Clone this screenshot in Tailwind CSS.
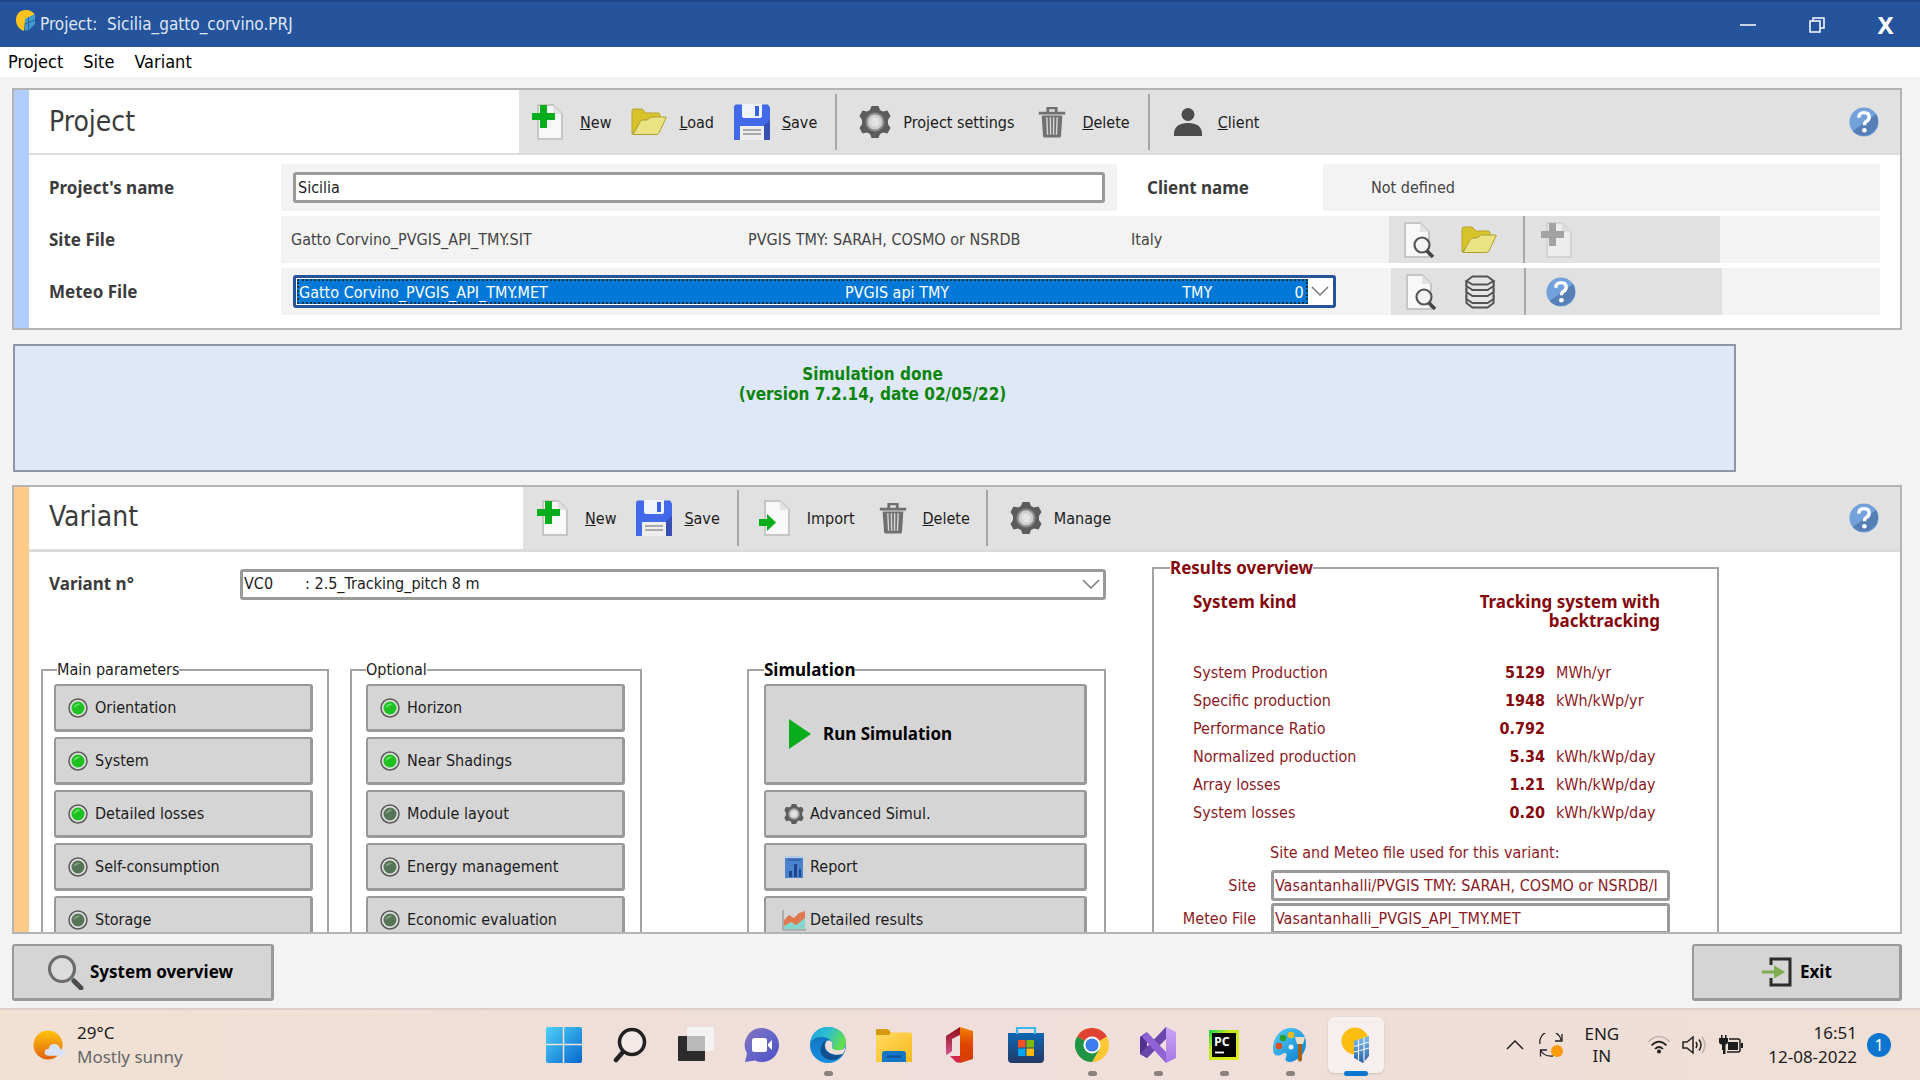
<!DOCTYPE html>
<html lang="en">
<head>
<meta charset="utf-8">
<title>Project: Sicilia_gatto_corvino.PRJ</title>
<script src="https://cdn.jsdelivr.net/npm/@tailwindcss/browser@4"></script>
</head>
<body class="flex h-screen flex-col overflow-hidden bg-[#f3f3f3] font-['DejaVu_Sans_Condensed','DejaVu_Sans',sans-serif] text-base text-[#1c1c1c]">

<!-- shared icons -->
<svg class="absolute h-0 w-0" aria-hidden="true">
  <defs>
    <linearGradient id="gStart" x1="0" y1="0" x2="1" y2="1"><stop offset="0" stop-color="#4fd0fb"/><stop offset="1" stop-color="#0669ce"/></linearGradient>
    <linearGradient id="gSun" x1="0" y1="0" x2="0" y2="1"><stop offset="0" stop-color="#fdc50b"/><stop offset="1" stop-color="#e2620e"/></linearGradient>
    <linearGradient id="gChat" x1="0" y1="0" x2="1" y2="1"><stop offset="0" stop-color="#8a6cb4"/><stop offset=".4" stop-color="#6a6acb"/><stop offset="1" stop-color="#4e4fc4"/></linearGradient>
    <linearGradient id="gEdge" x1="0" y1="0" x2="1" y2=".4"><stop offset="0" stop-color="#1c9fe0"/><stop offset=".5" stop-color="#2dc0d0"/><stop offset="1" stop-color="#63dc4e"/></linearGradient>
    <linearGradient id="gEdge2" x1="0" y1="0" x2="0" y2="1"><stop offset="0" stop-color="#0f6bb8"/><stop offset="1" stop-color="#1790e0"/></linearGradient>
    <linearGradient id="gFold" x1="0" y1="0" x2="1" y2="1"><stop offset="0" stop-color="#ffdb62"/><stop offset="1" stop-color="#f8b91b"/></linearGradient>
    <linearGradient id="gStore" x1="0" y1="0" x2="0" y2="1"><stop offset="0" stop-color="#0f67b2"/><stop offset="1" stop-color="#233a66"/></linearGradient>
    <linearGradient id="gOff" x1="0" y1="0" x2="0" y2="1"><stop offset="0" stop-color="#f08100"/><stop offset=".5" stop-color="#de4300"/><stop offset="1" stop-color="#d83b01"/></linearGradient>
    <linearGradient id="gOff2" x1="0" y1="0" x2="0" y2="1"><stop offset="0" stop-color="#8f0e12"/><stop offset="1" stop-color="#d5568f"/></linearGradient>
    <linearGradient id="gPaint" x1="0" y1="0" x2="1" y2="1"><stop offset="0" stop-color="#55d0f6"/><stop offset="1" stop-color="#0a7bd0"/></linearGradient>
    <linearGradient id="gPy" x1="0" y1="0" x2="1" y2="1"><stop offset="0" stop-color="#12d34e"/><stop offset=".35" stop-color="#c2e81f"/><stop offset="1" stop-color="#e9ef1d"/></linearGradient>
    <linearGradient id="gPanel" x1="0" y1="0" x2="0" y2="1"><stop offset="0" stop-color="#7cc0e8"/><stop offset="1" stop-color="#2a5da8"/></linearGradient>
    <linearGradient id="gVs" x1="0" y1="0" x2="0" y2="1"><stop offset="0" stop-color="#c9a3f6"/><stop offset="1" stop-color="#a878e6"/></linearGradient>
  </defs>
  <symbol id="i-page" viewBox="0 0 36 36">
    <path d="M6 1h15l9 9v25H6z" fill="#f8f8f8" stroke="#c6c6c6" stroke-width="2"/><path d="M21 1v9h9z" fill="#e2e2e2"/>
  </symbol>
  <symbol id="i-new" viewBox="0 0 36 36">
    <use href="#i-page"/><path d="M8 1h7v8h8v7h-8v8H8v-8H0V9h8z" fill="#07ad1b"/>
  </symbol>
  <symbol id="i-new-off" viewBox="0 0 36 36">
    <path d="M6 1h15l9 9v25H6z" fill="#ececec" stroke="#d2d2d2" stroke-width="2"/><path d="M21 1v9h9z" fill="#dcdcdc"/><path d="M8 1h7v8h8v7h-8v8H8v-8H0V9h8z" fill="#a3a3a3"/>
  </symbol>
  <symbol id="i-import" viewBox="0 0 36 36">
    <use href="#i-page"/><path d="M0 19h8v-5l9 8.500-9 8.500v-5H0z" fill="#07ad1b"/>
  </symbol>
  <symbol id="i-view" viewBox="0 0 36 36">
    <use href="#i-page"/><circle cx="23" cy="23" r="7.500" fill="#f4f4f4" stroke="#555" stroke-width="2.200"/><path d="M28 29l6 6" stroke="#444" stroke-width="3.500"/>
  </symbol>
  <symbol id="i-folder" viewBox="0 0 36 36">
    <path d="M1 30V7q0-2 2-2h8l4 4h12q2 0 2 2v5H12L1 30z" fill="#d9c32b" stroke="#b8a32a"/><path d="M2 30.500L9 18q1-2 3-2h4l4-3h15q.5 0 0 1L28 29q-1 1.500-3 1.500z" fill="#e9e384" stroke="#b0a030"/>
  </symbol>
  <symbol id="i-save" viewBox="0 0 36 36">
    <path d="M0 3q0-2.500 2-2.500h32l2 3V35q0 1-1 1H0z" fill="#4169ea"/><path d="M36 16v19q0 1-1 1h-6V22z" fill="#3650b4"/><path d="M8 0h20v12q0 2-2 2H10q-2 0-2-2z" fill="#f1f3fa"/><path d="M21 2h4v10h-4z" fill="#3a60e2"/><path d="M6 22h24v14H6z" fill="#eee"/><path d="M9 26h18M9 30h18" stroke="#aaa" stroke-width="2"/>
  </symbol>
  <symbol id="i-gear" viewBox="0 0 32 32">
    <path d="M12.500 0h7l1.500 4 3 1.500 4.500-1 3 5.500-2.500 4v4l2.500 4-3 5.500-4.500-1-3 1.500-1.500 4h-7L11 28l-3-1.500-4.500 1L.5 22 3 18v-4L.5 10l3-5.500 4.500 1L11 4z" fill="#5c5c5c"/><circle cx="16" cy="16" r="8" fill="#cfcfcf"/><circle cx="16" cy="16" r="8.500" fill="none" stroke="#8d8d8d" stroke-width="2"/><circle cx="16" cy="16" r="4.500" fill="#e3e3e3"/>
  </symbol>
  <symbol id="i-trash" viewBox="0 0 28 34">
    <path d="M0 6h28v3H0zM8 6V1h12v5h-3V3.500h-6V6zM3 10h22l-1.500 22q0 1.500-1.500 1.500H6q-1.500 0-1.500-1.500z" fill="#707070"/><path d="M8.500 12l.8 18.500M12.300 12l.2 18.500M15.800 12l-.2 18.500M19.500 12l-.8 18.500" stroke="#d6d6d6" stroke-width="1.500"/>
  </symbol>
  <symbol id="i-person" viewBox="0 0 28 28">
    <circle cx="14" cy="6.500" r="6.500" fill="#4c4c4c"/><path d="M0 28v-3q1-10 14-10t14 10v3z" fill="#4c4c4c"/>
  </symbol>
  <symbol id="i-help" viewBox="0 0 32 32">
    <circle cx="16" cy="16" r="15.500" fill="#72a1dc"/><path d="M29 7.500A15.500 15.500 0 0 1 4 25.500z" fill="#557fb5"/><path d="M10.500 11.500q0-5.500 5.500-5.500t5.500 5q0 3-3 4.500-2 1-2 4" fill="none" stroke="#fff" stroke-width="3.600"/><circle cx="16.400" cy="24.800" r="2.500" fill="#fff"/>
  </symbol>
  <symbol id="i-db" viewBox="0 0 30 34">
    <g fill="#e6e6e6" stroke="#555" stroke-width="2"><path d="M1.500 6v22l6 4.500h15l6-4.500V6z"/><path d="M1.500 20v4l6 4h15l6-4v-4"/><path d="M1.500 13v4l6 4h15l6-4v-4"/><path d="M1.500 6v5l6 4h15l6-4V6"/><path d="M7.500 1.500h15L28.500 6l-6 3.500h-15L1.500 6z"/></g>
  </symbol>
  <symbol id="i-on" viewBox="0 0 20 20">
    <circle cx="10" cy="10" r="9" fill="#dedede" stroke="#5a5a5a" stroke-width="1.500"/><circle cx="10" cy="10" r="6.500" fill="#1fc122"/><path d="M5.500 10a5 5 0 0 1 7-4z" fill="#62e065"/>
  </symbol>
  <symbol id="i-off" viewBox="0 0 20 20">
    <circle cx="10" cy="10" r="9" fill="#dedede" stroke="#5a5a5a" stroke-width="1.500"/><circle cx="10" cy="10" r="6.500" fill="#567556"/><path d="M5.500 10a5 5 0 0 1 7-4z" fill="#7fa07f"/>
  </symbol>
  <symbol id="i-chev" viewBox="0 0 18 10"><path d="M1 1l8 8 8-8" fill="none" stroke="#777" stroke-width="1.500"/></symbol>
  <symbol id="i-pv" viewBox="0 0 30 36">
    <circle cx="14" cy="14" r="13.500" fill="#fbbd0f"/><path d="M13 14L28 9v20l-6 7-9-5z" fill="url(#gPanel)"/><path d="M13 19.500l15-4.500M13 25l15-4M17.500 12.500v21M23 10.500v24" stroke="#eef4fa" stroke-width="1.200"/>
  </symbol>
</svg>

<header class="flex h-[47px] shrink-0 items-center border-t-2 border-[#1e4688] bg-[#25539c] pl-4 text-white">
  <svg class="mb-2 h-6 w-5" viewBox="0 0 20 24"><path d="M10 1C4 1 0 5 0 11c0 5 3 9 8 11l1-11 10-5q-3-5-9-5z" fill="#f9c31c"/><path d="M9 10l10-5v10l-5 5-5 2z" fill="#3f9ccc"/><path d="M12.500 8v12M9 15l10-4" stroke="#25649f"/></svg>
  <h1 class="ml-1 flex-1 whitespace-pre text-[17px] text-[#dfe6f3]">Project:  Sicilia_gatto_corvino.PRJ</h1>
  <button aria-label="Minimize" class="flex h-11 w-[69px] items-center justify-center"><svg class="h-4 w-4" viewBox="0 0 16 16"><path d="M0 8h16" stroke="#fff" stroke-width="1.500"/></svg></button>
  <button aria-label="Restore" class="flex h-11 w-[69px] items-center justify-center"><svg class="h-4 w-4" viewBox="0 0 16 16" fill="none" stroke="#fff" stroke-width="1.500"><path d="M1 4h10v11H1zM4 4V1h11v10h-4"/></svg></button>
  <button aria-label="Close" class="flex h-11 w-[69px] items-center justify-center font-['Noto_Sans',sans-serif] text-2xl font-bold">X</button>
</header>

<nav class="flex h-[30px] shrink-0 items-center gap-5 bg-white pl-2 text-lg text-black">
  <a href="#">Project</a><a href="#">Site</a><a href="#">Variant</a>
</nav>

<main class="flex min-h-0 flex-1 flex-col pt-[11px] pr-[18px] pl-3">

  <!-- project -->
  <section class="flex shrink-0 border-2 border-[#b4b4b4] bg-white">
    <div class="w-[15px] bg-[#b0cdfd]"></div>
    <div class="min-w-0 flex-1">
      <div class="flex h-[65px] border-b-2 border-[#dcdcdc]">
        <h2 class="w-[490px] pt-3 pl-5 text-[28px] leading-10 text-[#3c3c3c]">Project</h2>
        <div class="flex flex-1 items-center bg-[#e1e1e1] pr-[21px] pl-[13px]">
          <button class="flex items-center"><svg class="size-9"><use href="#i-new"/></svg><span class="ml-3 pt-0.5"><u>N</u>ew</span></button>
          <button class="ml-5 flex items-center"><svg class="size-9"><use href="#i-folder"/></svg><span class="ml-3 pt-0.5"><u>L</u>oad</span></button>
          <button class="ml-5 flex items-center"><svg class="size-9"><use href="#i-save"/></svg><span class="ml-3 pt-0.5"><u>S</u>ave</span></button>
          <div class="mr-[22px] ml-[18px] h-14 w-0.5 bg-[#a8a8a8]"></div>
          <button class="flex items-center"><svg class="size-8"><use href="#i-gear"/></svg><span class="ml-3 pt-0.5">Project settings</span></button>
          <button class="ml-6 flex items-center"><svg class="h-8 w-7"><use href="#i-trash"/></svg><span class="ml-4 pt-0.5"><u>D</u>elete</span></button>
          <div class="mr-6 ml-[18px] h-14 w-0.5 bg-[#a8a8a8]"></div>
          <button class="flex items-center"><svg class="size-7"><use href="#i-person"/></svg><span class="ml-4 pt-0.5"><u>C</u>lient</span></button>
          <button aria-label="Help" class="ml-auto"><svg class="size-[30px]"><use href="#i-help"/></svg></button>
        </div>
      </div>
      <div class="flex flex-col gap-[5px] pt-[9px] pr-5 pb-[13px] text-[#444]">
        <div class="flex h-[47px] items-center">
          <label for="pname" class="w-[252px] pl-5 font-['Noto_Sans',sans-serif] text-[17px] font-bold text-[#3c3c3c]">Project's name</label>
          <div class="flex h-full w-[836px] items-center bg-[#f3f3f3] px-3">
            <input id="pname" value="Sicilia" class="h-[31px] w-full rounded-[3px] border-3 border-[#9a9a9a] bg-white px-0.5 text-[#1c1c1c]">
          </div>
          <span class="w-[206px] pl-[30px] font-['Noto_Sans',sans-serif] text-[17px] font-bold text-[#3c3c3c]">Client name</span>
          <div class="flex h-full flex-1 items-center bg-[#f3f3f3] pl-12">Not defined</div>
        </div>
        <div class="flex h-[47px] items-center">
          <span class="w-[252px] pl-5 font-['Noto_Sans',sans-serif] text-[17px] font-bold text-[#3c3c3c]">Site File</span>
          <div class="flex h-full flex-1 items-center bg-[#f3f3f3] pl-2.5">
            <span class="w-[457px]">Gatto Corvino_PVGIS_API_TMY.SIT</span>
            <span class="w-[383px]">PVGIS TMY: SARAH, COSMO or NSRDB</span>
            <span class="w-[258px]">Italy</span>
            <div class="flex h-full w-[331px] items-center bg-[#e1e1e1] pl-2.5">
              <button aria-label="View site"><svg class="size-9"><use href="#i-view"/></svg></button>
              <button aria-label="Open site" class="ml-[26px]"><svg class="size-9"><use href="#i-folder"/></svg></button>
              <div class="mr-4 ml-[26px] h-full w-0.5 bg-[#a8a8a8]"></div>
              <button aria-label="New site" disabled><svg class="size-9"><use href="#i-new-off"/></svg></button>
            </div>
          </div>
        </div>
        <div class="flex h-[47px] items-center">
          <label for="meteo" class="w-[252px] pl-5 font-['Noto_Sans',sans-serif] text-[17px] font-bold text-[#3c3c3c]">Meteo File</label>
          <div class="flex h-full flex-1 items-center bg-[#f3f3f3] pl-3">
            <div class="relative h-[33px] w-[1043px] rounded-[3px] border-3 border-[#25539c] bg-white p-px pr-[25px]">
              <select id="meteo" class="h-full w-full appearance-none overflow-hidden border-2 border-dotted border-[#20303f] bg-[#0078d7] text-white">
                <option>Gatto Corvino_PVGIS_API_TMY.MET&nbsp;&nbsp;&nbsp;&nbsp;&nbsp;&nbsp;&nbsp;&nbsp;&nbsp;&nbsp;&nbsp;&nbsp;&nbsp;&nbsp;&nbsp;&nbsp;&nbsp;&nbsp;&nbsp;&nbsp;&nbsp;&nbsp;&nbsp;&nbsp;&nbsp;&nbsp;&nbsp;&nbsp;&nbsp;&nbsp;&nbsp;&nbsp;&nbsp;&nbsp;&nbsp;&nbsp;&nbsp;&nbsp;&nbsp;&nbsp;&nbsp;&nbsp;&nbsp;&nbsp;&nbsp;&nbsp;&nbsp;&nbsp;&nbsp;&nbsp;&nbsp;&nbsp;&nbsp;&nbsp;&nbsp;&nbsp;&nbsp;&nbsp;&nbsp;&nbsp;&nbsp;&nbsp;&nbsp;&nbsp;&nbsp;PVGIS api TMY&nbsp;&nbsp;&nbsp;&nbsp;&nbsp;&nbsp;&nbsp;&nbsp;&nbsp;&nbsp;&nbsp;&nbsp;&nbsp;&nbsp;&nbsp;&nbsp;&nbsp;&nbsp;&nbsp;&nbsp;&nbsp;&nbsp;&nbsp;&nbsp;&nbsp;&nbsp;&nbsp;&nbsp;&nbsp;&nbsp;&nbsp;&nbsp;&nbsp;&nbsp;&nbsp;&nbsp;&nbsp;&nbsp;&nbsp;&nbsp;&nbsp;&nbsp;&nbsp;&nbsp;&nbsp;&nbsp;&nbsp;&nbsp;&nbsp;&nbsp;&nbsp;TMY&nbsp;&nbsp;&nbsp;&nbsp;&nbsp;&nbsp;&nbsp;&nbsp;&nbsp;&nbsp;&nbsp;&nbsp;&nbsp;&nbsp;&nbsp;&nbsp;&nbsp;&nbsp;0 k</option>
              </select>
              <svg class="pointer-events-none absolute top-2 right-1 h-2.5 w-[18px]"><use href="#i-chev"/></svg>
            </div>
            <div class="ml-[55px] flex h-full w-[331px] items-center bg-[#e1e1e1] pl-2.5">
              <button aria-label="View meteo"><svg class="size-9"><use href="#i-view"/></svg></button>
              <button aria-label="Meteo database" class="ml-7"><svg class="h-[34px] w-[30px]"><use href="#i-db"/></svg></button>
              <div class="mr-5 ml-[29px] h-full w-0.5 bg-[#a8a8a8]"></div>
              <button aria-label="Help on meteo"><svg class="size-[30px]"><use href="#i-help"/></svg></button>
            </div>
          </div>
        </div>
      </div>
    </div>
  </section>

  <!-- status -->
  <section class="mt-[14px] mr-[166px] ml-px h-[128px] shrink-0 border-2 border-[#8e97a8] bg-[#dfe8f9] pt-[18px] pr-1 text-center text-[17px] leading-5 font-bold text-[#0a840a]">
    <p>Simulation done</p><p>(version 7.2.14, date 02/05/22)</p>
  </section>

  <!-- variant -->
  <section class="mt-[13px] flex min-h-0 flex-1 overflow-hidden border-2 border-[#b4b4b4] bg-white">
    <div class="w-[15px] bg-[#fdca87]"></div>
    <div class="min-w-0 flex-1">
      <div class="flex h-[65px] border-b-3 border-[#dcdcdc]">
        <h2 class="w-[494px] pt-2.5 pl-5 text-[28px] leading-10 text-[#3c3c3c]">Variant</h2>
        <div class="flex flex-1 items-center bg-[#e1e1e1] pr-[21px] pl-[14px]">
          <button class="flex items-center"><svg class="size-9"><use href="#i-new"/></svg><span class="ml-3 pt-0.5"><u>N</u>ew</span></button>
          <button class="ml-5 flex items-center"><svg class="size-9"><use href="#i-save"/></svg><span class="ml-3 pt-0.5"><u>S</u>ave</span></button>
          <div class="mr-5 ml-[17px] h-14 w-0.5 bg-[#a8a8a8]"></div>
          <button class="flex items-center"><svg class="size-9"><use href="#i-import"/></svg><span class="ml-3 pt-0.5">Import</span></button>
          <button class="ml-6 flex items-center"><svg class="h-8 w-7"><use href="#i-trash"/></svg><span class="ml-4 pt-0.5"><u>D</u>elete</span></button>
          <div class="mr-[22px] ml-4 h-14 w-0.5 bg-[#a8a8a8]"></div>
          <button class="flex items-center"><svg class="size-8"><use href="#i-gear"/></svg><span class="ml-3 pt-0.5">Manage</span></button>
          <button aria-label="Help" class="ml-auto"><svg class="size-[30px]"><use href="#i-help"/></svg></button>
        </div>
      </div>

      <div class="flex">
        <div class="w-[1077px] shrink-0">
          <div class="flex h-16 items-center">
            <label for="variant" class="w-[211px] pl-5 font-['Noto_Sans',sans-serif] text-[17px] font-bold text-[#3c3c3c]">Variant n°</label>
            <div class="relative flex-1">
              <select id="variant" class="h-[31px] w-full appearance-none rounded-[3px] border-3 border-[#9a9a9a] bg-white px-px">
                <option>VC0&nbsp;&nbsp;&nbsp;&nbsp;&nbsp;&nbsp;&nbsp;: 2.5_Tracking_pitch 8 m</option>
              </select>
              <svg class="pointer-events-none absolute top-2.5 right-1.5 h-2.5 w-[18px]"><use href="#i-chev"/></svg>
            </div>
          </div>
          <div class="mt-[42px] flex pl-3">
            <fieldset class="w-[288px] border-2 border-[#a3a3a3] pl-[11px]">
              <legend class="ml-[3px] h-6 leading-6">Main parameters</legend>
              <div class="flex flex-col gap-[5px] pt-0.5 pr-[14px] pb-6">
                <button class="flex h-12 items-center gap-[7px] rounded-[3px] border-2 border-r-3 border-b-3 border-[#999] bg-[#d5d5d5] pl-3"><svg class="size-5"><use href="#i-on"/></svg>Orientation</button>
                <button class="flex h-12 items-center gap-[7px] rounded-[3px] border-2 border-r-3 border-b-3 border-[#999] bg-[#d5d5d5] pl-3"><svg class="size-5"><use href="#i-on"/></svg>System</button>
                <button class="flex h-12 items-center gap-[7px] rounded-[3px] border-2 border-r-3 border-b-3 border-[#999] bg-[#d5d5d5] pl-3"><svg class="size-5"><use href="#i-on"/></svg>Detailed losses</button>
                <button class="flex h-12 items-center gap-[7px] rounded-[3px] border-2 border-r-3 border-b-3 border-[#999] bg-[#d5d5d5] pl-3"><svg class="size-5"><use href="#i-off"/></svg>Self-consumption</button>
                <button class="flex h-12 items-center gap-[7px] rounded-[3px] border-2 border-r-3 border-b-3 border-[#999] bg-[#d5d5d5] pl-3"><svg class="size-5"><use href="#i-off"/></svg>Storage</button>
              </div>
            </fieldset>
            <fieldset class="ml-[21px] w-[292px] border-2 border-[#a3a3a3] pl-[14px]">
              <legend class="h-6 leading-6">Optional</legend>
              <div class="flex flex-col gap-[5px] pt-0.5 pr-[15px] pb-6">
                <button class="flex h-12 items-center gap-[7px] rounded-[3px] border-2 border-r-3 border-b-3 border-[#999] bg-[#d5d5d5] pl-3"><svg class="size-5"><use href="#i-on"/></svg>Horizon</button>
                <button class="flex h-12 items-center gap-[7px] rounded-[3px] border-2 border-r-3 border-b-3 border-[#999] bg-[#d5d5d5] pl-3"><svg class="size-5"><use href="#i-on"/></svg>Near Shadings</button>
                <button class="flex h-12 items-center gap-[7px] rounded-[3px] border-2 border-r-3 border-b-3 border-[#999] bg-[#d5d5d5] pl-3"><svg class="size-5"><use href="#i-off"/></svg>Module layout</button>
                <button class="flex h-12 items-center gap-[7px] rounded-[3px] border-2 border-r-3 border-b-3 border-[#999] bg-[#d5d5d5] pl-3"><svg class="size-5"><use href="#i-off"/></svg>Energy management</button>
                <button class="flex h-12 items-center gap-[7px] rounded-[3px] border-2 border-r-3 border-b-3 border-[#999] bg-[#d5d5d5] pl-3"><svg class="size-5"><use href="#i-off"/></svg>Economic evaluation</button>
              </div>
            </fieldset>
            <fieldset class="ml-auto w-[359px] border-2 border-[#a3a3a3] pl-[15px]">
              <legend class="h-6 font-['Noto_Sans',sans-serif] text-[17px] leading-6 font-bold text-black">Simulation</legend>
              <div class="flex flex-col gap-[5px] pt-0.5 pr-[17px] pb-6">
                <button class="flex h-[101px] items-center gap-3 rounded-[3px] border-2 border-r-3 border-b-3 border-[#999] bg-[#d5d5d5] pl-[23px] font-['Noto_Sans',sans-serif] text-[17px] font-bold text-black"><svg class="h-[30px] w-[22px]" viewBox="0 0 22 30"><path d="M0 0l22 15L0 30z" fill="#07ad1b"/></svg>Run Simulation</button>
                <button class="flex h-12 items-center gap-1 rounded-[3px] border-2 border-r-3 border-b-3 border-[#999] bg-[#d5d5d5] pl-4"><svg class="h-5 w-6"><use href="#i-gear"/></svg>Advanced Simul.</button>
                <button class="flex h-12 items-center gap-1 rounded-[3px] border-2 border-r-3 border-b-3 border-[#999] bg-[#d5d5d5] pl-4"><svg class="size-6" viewBox="0 0 24 24"><path d="M3 1h18v22H3z" fill="#4a82d0"/><path d="M3 1h18v2H3z" fill="#b8cce8"/><path d="M6 5h13" stroke="#2a4f8c"/><path d="M7 16h3v6H7zM12 9h3v13h-3zM17 14h2v8h-2z" fill="#1f4788"/></svg>Report</button>
                <button class="flex h-12 items-center gap-1 rounded-[3px] border-2 border-r-3 border-b-3 border-[#999] bg-[#d5d5d5] pl-4"><svg class="size-6" viewBox="0 0 24 24"><path d="M2 15l5-2 5 3 11-8v13H2z" fill="#86d6cc"/><path d="M2 12l5-5 5 3 5-5 6-2v7l-9 7-5-3-7 4z" fill="#e07850"/><path d="M1 2v20h23" fill="none" stroke="#888"/></svg>Detailed results</button>
              </div>
            </fieldset>
          </div>
        </div>

        <fieldset class="mt-1 ml-[46px] w-[567px] self-start border-2 border-[#a3a3a3] text-[#8b1a1f]">
          <legend class="ml-4 h-6 font-['Noto_Sans',sans-serif] text-[17px] leading-6 font-bold text-[#85080c]">Results overview</legend>
          <div class="flex justify-between pt-3 pr-[57px] pl-[39px] font-['Noto_Sans',sans-serif] text-[17px] leading-[19px] font-bold text-[#85080c]">
            <span>System kind</span><span class="w-[190px] text-right">Tracking system with backtracking</span>
          </div>
          <table class="mt-[29px] ml-[39px] leading-7">
            <tr><td class="w-[252px]">System Production</td><td class="w-[100px] text-right font-bold text-[#85080c]">5129</td><td class="pl-[11px]">MWh/yr</td></tr>
            <tr><td>Specific production</td><td class="text-right font-bold text-[#85080c]">1948</td><td class="pl-[11px]">kWh/kWp/yr</td></tr>
            <tr><td>Performance Ratio</td><td class="text-right font-bold text-[#85080c]">0.792</td><td></td></tr>
            <tr><td>Normalized production</td><td class="text-right font-bold text-[#85080c]">5.34</td><td class="pl-[11px]">kWh/kWp/day</td></tr>
            <tr><td>Array losses</td><td class="text-right font-bold text-[#85080c]">1.21</td><td class="pl-[11px]">kWh/kWp/day</td></tr>
            <tr><td>System losses</td><td class="text-right font-bold text-[#85080c]">0.20</td><td class="pl-[11px]">kWh/kWp/day</td></tr>
          </table>
          <p class="mt-3 ml-[116px] leading-7">Site and Meteo file used for this variant:</p>
          <div class="mt-[3px] grid grid-cols-[102px_399px] items-center gap-x-[15px] gap-y-0.5 pb-8">
            <label for="rsite" class="text-right">Site</label>
            <input id="rsite" readonly value="Vasantanhalli/PVGIS TMY: SARAH, COSMO or NSRDB/I" class="h-[31px] rounded-[3px] border-3 border-[#9a9a9a] bg-white px-px">
            <label for="rmeteo" class="text-right">Meteo File</label>
            <input id="rmeteo" readonly value="Vasantanhalli_PVGIS_API_TMY.MET" class="h-[31px] rounded-[3px] border-3 border-[#9a9a9a] bg-white px-px">
          </div>
        </fieldset>
      </div>
    </div>
  </section>

  <div class="flex h-[74px] shrink-0 items-start justify-between pt-2.5 font-['Noto_Sans',sans-serif] text-[17px] font-bold text-black">
    <button class="flex h-[57px] w-[262px] items-center gap-1.5 rounded-[3px] border-2 border-r-3 border-b-3 border-[#999] bg-[#d5d5d5] pl-[34px]"><svg class="size-9" viewBox="0 0 36 36"><circle cx="14" cy="15" r="12.500" fill="#dcdcdc" stroke="#6c6c6c" stroke-width="3.200"/><path d="M23 24l4 3" stroke="#6c8a8f" stroke-width="3"/><path d="M26 27l7 7" stroke="#4c4c4c" stroke-width="5" stroke-linecap="round"/></svg>System overview</button>
    <button class="flex h-[57px] w-[210px] items-center gap-2 rounded-[3px] border-2 border-r-3 border-b-3 border-[#999] bg-[#d5d5d5] pl-[68px]"><svg class="h-[30px] w-[30px]" viewBox="0 0 30 30"><path d="M9 8V2h19v26H9v-7" fill="none" stroke="#2c2c28" stroke-width="3"/><path d="M0 15h15" stroke="#7fae4e" stroke-width="3"/><path d="M12 8.500L23 15l-11 6.500z" fill="#7fae4e"/></svg>Exit</button>
  </div>
</main>

<footer class="grid h-[72px] shrink-0 grid-cols-[1fr_auto_1fr] items-center border-t-2 border-[#dccfcb] bg-linear-to-r from-[#f1e1d3] via-[#efdedb] to-[#f0dfd5] font-['Noto_Sans',sans-serif] text-[17px] text-[#1c1c1c]">
  <a href="#" class="flex items-center gap-3 pl-[33px]">
    <svg class="size-8" viewBox="0 0 33 32"><circle cx="15.500" cy="16" r="15" fill="url(#gSun)"/><path d="M16 27q-4 0-4-3.500T16 20q1-5 6-5t6 5q5 0 5 3.500T29 27z" fill="#d7e3f5"/></svg>
    <span class="leading-6">29°C<br><span class="text-[#666]">Mostly sunny</span></span>
  </a>

  <div class="flex h-full items-center">
    <button aria-label="Start" class="flex w-[66px] justify-center"><svg class="size-9" viewBox="0 0 36 36" fill="url(#gStart)"><rect width="36" height="36" rx="2"/><path d="M17.500 0v36M0 17.500h36" stroke="#efe3df" stroke-width="1.500"/></svg></button>
    <button aria-label="Search" class="flex w-[66px] justify-center"><svg class="size-9" viewBox="0 0 36 36" fill="none" stroke="#222" stroke-linecap="round"><circle cx="20" cy="15" r="12.500" fill="#f4eae8" stroke-width="3.500"/><path d="M11 25l-7 8" stroke-width="4.500"/></svg></button>
    <button aria-label="Task view" class="flex w-[66px] justify-center"><svg class="size-9" viewBox="0 0 36 36"><rect y="9" width="27" height="25" rx="1" fill="#2b2b2b"/><rect x="9" width="27" height="24" rx="1" fill="#f3f3f3"/><path d="M9 9h18v15H9z" fill="#b9b9b9"/></svg></button>
    <button aria-label="Chat" class="flex w-[66px] justify-center"><svg class="size-9" viewBox="0 0 36 36"><path d="M18 1a17 17 0 1 1-7 32.500L1 35l2-8.500A17 17 0 0 1 18 1z" fill="url(#gChat)"/><rect x="8" y="11" width="15" height="14" rx="2.500" fill="#fff"/><path d="M24 17l4-4v10l-4-4z" fill="#fff"/></svg></button>
    <button aria-label="Edge" class="relative flex h-full w-[66px] items-center justify-center"><svg class="size-9" viewBox="0 0 36 36"><circle cx="18" cy="18" r="18" fill="url(#gEdge2)"/><path d="M0 16C2 5 9 0 18 0c11 0 18 7 18 15 0 6-4 9-9 9-4 0-6-1-5-3 3-5-1-9-8-11C8 9 3 11 0 16z" fill="url(#gEdge)"/><path d="M33 27c-4 6-12 8-18 4-7-5-5-14 1-18-1 2-2 5-1 8 2 6 10 8 18 6z" fill="#10508f"/><path d="M16 15c3-3 7-1 6.500 3-.5 3-1 4 3 5 4 .8 8 0 10-3-.5 3-1 5-3 7-7 2-15 0-17-6-.7-2-.5-4 .5-6z" fill="#efdfdc"/></svg><i class="absolute bottom-1 h-[5px] w-[9px] rounded-full bg-[#8a807e]"></i></button>
    <button aria-label="File Explorer" class="flex w-[66px] justify-center"><svg class="size-9" viewBox="0 0 36 36"><path d="M0 3q0-1 1-1h9q3 0 5 4l-2 5H0z" fill="#d69a10"/><path d="M0 8h12q2 0 3-2.500h19q2 0 2 1.500v28H0z" fill="url(#gFold)"/><path d="M6 35V27q0-3 3-3h18q3 0 3 3v8z" fill="#1377c6"/><path d="M11 29.500h14" stroke="#0b4f94" stroke-width="2"/></svg></button>
    <button aria-label="Office" class="flex w-[66px] justify-center"><svg class="size-9" viewBox="0 0 36 36"><path d="M18 0l13 4v28l-13 4V0z" fill="url(#gOff)"/><path d="M18 0v8l-8 4v12l-5 4q-1 0-1-2V9z" fill="url(#gOff2)"/><path d="M8 29h10v6.500q-2 .5-4-.500z" fill="#d6274a"/></svg></button>
    <button aria-label="Store" class="flex w-[66px] justify-center"><svg class="size-9" viewBox="0 0 36 36"><path d="M0 6h36v26q0 4-4 4H4q-4 0-4-4z" fill="url(#gStore)"/><path d="M9 7V1h18v6" fill="none" stroke="#35b7ef" stroke-width="2.200"/><path d="M10 13h7.500v7.500H10z" fill="#f25022"/><path d="M18.500 13H26v7.500h-7.500z" fill="#7fba00"/><path d="M10 21.500h7.500V29H10z" fill="#00a4ef"/><path d="M18.500 21.500H26V29h-7.500z" fill="#ffb900"/></svg></button>
    <button aria-label="Chrome" class="relative flex h-full w-[66px] items-center justify-center"><svg class="size-[34px]" viewBox="0 0 48 48"><circle cx="24" cy="24" r="24" fill="#fcc934"/><path d="M24 24L3.200 12A24 24 0 0 1 44.800 12z" fill="#df4233"/><path d="M24 12h20.800l-4-5L24 0z" fill="#df4233"/><path d="M3.200 12A24 24 0 0 0 24 48l10.400-18L24 24z" fill="#1f9346"/><circle cx="24" cy="24" r="12" fill="#fff"/><circle cx="24" cy="24" r="9.300" fill="#3c7df0"/></svg><i class="absolute bottom-1 h-[5px] w-[9px] rounded-full bg-[#8a807e]"></i></button>
    <button aria-label="Visual Studio" class="relative flex h-full w-[66px] items-center justify-center"><svg class="size-9" viewBox="0 0 36 36"><path d="M0 10l7-5v26l-7-4z" fill="#52308f"/><path d="M26 0v11L7 31l-7-4z" fill="#6b46ad"/><path d="M26 0v12L7 31l-3-6z" fill="#6b46ad"/><path d="M7 5l19 20v11L2 10z" fill="#8f63d6"/><path d="M26 0l10 5v26l-10 5z" fill="url(#gVs)"/></svg><i class="absolute bottom-1 h-[5px] w-[9px] rounded-full bg-[#8a807e]"></i></button>
    <button aria-label="PyCharm" class="relative flex h-full w-[66px] items-center justify-center"><svg class="size-[30px]" viewBox="0 0 30 30"><path d="M0 0h30v30H0z" fill="url(#gPy)"/><path d="M3 3h24v24H3z" fill="#050505"/><text x="5" y="15.500" font-family="Open Sans" font-weight="bold" font-size="12.500" fill="#fff">PC</text><path d="M6 22.500h9" stroke="#fff" stroke-width="1.800"/></svg><i class="absolute bottom-1 h-[5px] w-[9px] rounded-full bg-[#8a807e]"></i></button>
    <button aria-label="Paint" class="relative flex h-full w-[66px] items-center justify-center"><svg class="size-9" viewBox="0 0 36 36"><path d="M19 1c10 0 16 8 15 17-1 10-9 16-16 17-5 0-5-3-4-5 2-4-1-5-4-3-4 3-9 2-9-5C1 11 8 1 19 1z" fill="url(#gPaint)"/><circle cx="19" cy="8" r="3.300" fill="#fdb913"/><circle cx="11" cy="11" r="3.300" fill="#2ca02c"/><circle cx="7" cy="19" r="3.300" fill="#e04f1d"/><circle cx="19" cy="20" r="2.500" fill="#e8f4fa"/><path d="M26 16h4v17q-2 3-4 0z" fill="#a65f17"/><path d="M23 10h10l-2 7h-6z" fill="#e9ddc8"/></svg><i class="absolute bottom-1 h-[5px] w-[9px] rounded-full bg-[#8a807e]"></i></button>
    <button aria-label="PVsyst" class="relative flex h-full w-[66px] items-center justify-center"><span class="flex h-14 w-14 items-center justify-center rounded-md bg-[#f7efed] shadow-sm"><svg class="h-9 w-[30px]"><use href="#i-pv"/></svg></span><i class="absolute bottom-1 h-[5px] w-6 rounded-full bg-[#0d76d1]"></i></button>
  </div>

  <div class="flex items-center justify-end pr-[29px]">
    <button aria-label="Hidden icons"><svg class="h-2.5 w-[18px]" viewBox="0 0 18 10"><path d="M1 9l8-8 8 8" fill="none" stroke="#222" stroke-width="1.500"/></svg></button>
    <svg class="ml-[15px] size-6" viewBox="0 0 24 24" fill="none" stroke="#222" stroke-width="1.300"><path d="M1 11A10.500 10.500 0 0 1 22 7M23 1v7h-7M8 17H1.500v6.500M2 18q4 6 12 5"/><circle cx="18" cy="18" r="6" fill="#fb9a0b" stroke="none"/></svg>
    <span class="ml-[22px] text-center leading-[22px]">ENG<br>IN</span>
    <svg class="ml-7 h-[18px] w-6" viewBox="0 0 24 18" fill="none" stroke="#222" stroke-width="1.700"><path d="M1 6q11-11 22 0" stroke="#bdb2ad"/><path d="M4.500 9.500q7.500-7.500 15 0M8 13q4-4 8 0"/><circle cx="12" cy="15.500" r="2" fill="#222" stroke="none"/></svg>
    <svg class="ml-[11px] h-5 w-6" viewBox="0 0 24 20" fill="none" stroke="#222" stroke-width="1.500"><path d="M1 7h4l6-5v16l-6-5H1zM14 7q2 3 0 6M17 4.500q4 5.500 0 11"/><path d="M20 2q6 8 0 16" stroke="#bdb2ad"/></svg>
    <svg class="ml-[13px] h-5 w-6" viewBox="0 0 24 20" fill="#1c1c1c"><path d="M2 0h1.500v3H6V0h1.500v3H9v4q0 2-2.500 2.500V19H4v-4H3V9.500Q0 9 0 7V3h2z"/><path d="M10 4h9q2 0 2 2v9q0 2-2 2H8" fill="none" stroke="#1c1c1c" stroke-width="1.500"/><path d="M9 7h10v8H9zM22 8h2v5h-2z"/></svg>
    <span class="ml-[25px] text-right leading-6">16:51<br>12-08-2022</span>
    <span class="ml-2.5 flex size-6 items-center justify-center rounded-full bg-[#0d76d1] text-base text-white">1</span>
  </div>
</footer>
</body>
</html>
